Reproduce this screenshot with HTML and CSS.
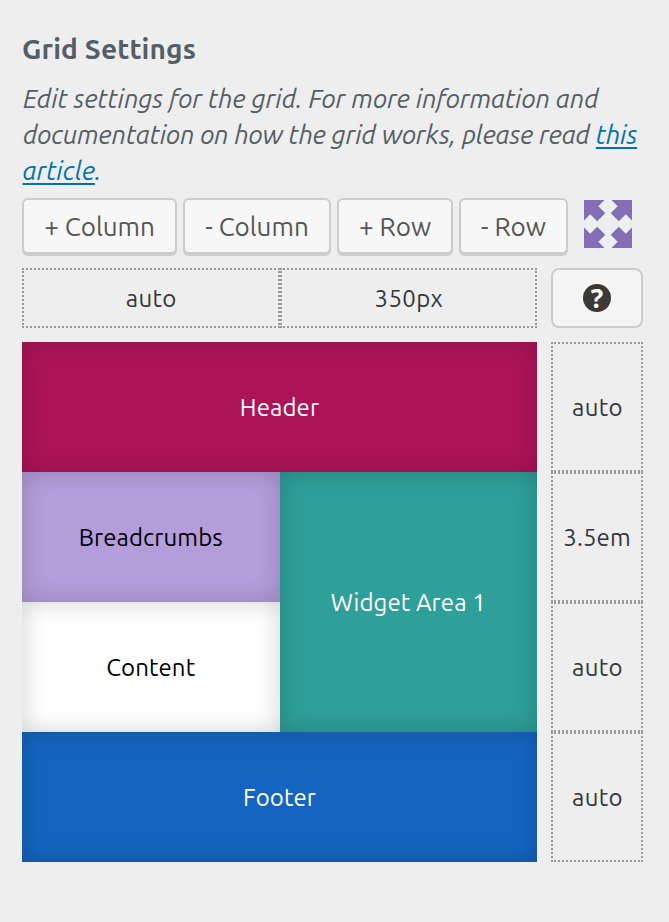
FILE: index.html
```
<!DOCTYPE html>
<html lang="en">
<head>
<meta charset="utf-8">
<title>Grid Settings</title>
<link rel="stylesheet" href="styles.css">
</head>
<body>
<main class="panel">
  <h1 class="title"><span>Grid Settings</span></h1>
  <p class="description">
    <span class="line line-1">Edit settings for the grid. For more information and</span>
    <span class="line line-2">documentation on how the grid works, please read <a href="#">this</a></span>
    <span class="line line-3"><a href="#">article</a>.</span>
  </p>
  <div class="toolbar">
    <button class="button add-column"><span>+ Column</span></button>
    <button class="button remove-column"><span>- Column</span></button>
    <button class="button add-row"><span>+ Row</span></button>
    <button class="button remove-row"><span>- Row</span></button>
    <svg class="expand" viewBox="0 0 48 48" aria-hidden="true">
      <path d="M0 0H20.500L14.300 6.200L21.300 13.200L13.200 21.300L6.200 14.300L0 20.500Z"/>
      <path d="M48 0H27.500L33.700 6.200L26.700 13.200L34.800 21.300L41.800 14.300L48 20.500Z"/>
      <path d="M0 48H20.500L14.300 41.800L21.300 34.800L13.200 26.700L6.200 33.700L0 27.500Z"/>
      <path d="M48 48H27.500L33.700 41.800L26.700 34.800L34.800 26.700L41.800 33.700L48 27.500Z"/>
    </svg>
  </div>
  <div class="builder">
    <div class="columns">
      <div class="track auto">auto</div>
      <div class="track px">350px</div>
    </div>
    <button class="help"><span class="help-icon">?</span></button>
    <div class="areas">
      <div class="area header">Header</div>
      <div class="area breadcrumbs">Breadcrumbs</div>
      <div class="area widget">Widget Area 1</div>
      <div class="area content">Content</div>
      <div class="area footer">Footer</div>
    </div>
    <div class="rows">
      <div class="track auto">auto</div>
      <div class="track em">3.5em</div>
      <div class="track auto">auto</div>
      <div class="track auto">auto</div>
    </div>
  </div>
</main>
</body>
</html>
```
FILE: styles.css
```
* {
  box-sizing: border-box;
}

body {
  margin: 0;
  background: #eee;
  color: #555d66;
  font-family: Ubuntu, "Noto Sans", sans-serif;
}

.panel {
  padding: 31px 26px 60px 22px;
}

.title {
  margin: 0;
  font-size: 28px;
  line-height: 36px;
  font-weight: 700;
  letter-spacing: 0.15px;
}

.description {
  margin: 14px 0 9px;
  font-size: 26px;
  line-height: 36px;
  font-style: italic;
}

.line {
  display: block;
  white-space: nowrap;
}

.line-1 { padding-left: 1px; letter-spacing: -0.1px; }
.line-2 { padding-left: 1px; letter-spacing: -0.17px; }
.line-3 { padding-left: 0.5px; letter-spacing: -0.1px; }

.description a {
  color: #0073aa;
  text-decoration-thickness: 2px;
  text-underline-offset: 3px;
  text-decoration-skip-ink: none;
}

.toolbar {
  display: flex;
  gap: 6px;
  height: 56px;
}

.button {
  display: flex;
  align-items: center;
  justify-content: center;
  height: 56px;
  padding: 2px 0 0;
  border: 2px solid #ccc;
  border-radius: 6px;
  background: #f7f7f7;
  box-shadow: 0 2px 0 #ccc;
  color: #555;
  font: 26px/50px Ubuntu, "Noto Sans", sans-serif;
  white-space: nowrap;
}

.add-column { width: 155px; }
.remove-column { width: 148px; }
.add-row { width: 116px; }
.remove-row { width: 109px; }

.expand {
  width: 48px;
  height: 48px;
  margin: 2px 0 0 10px;
  fill: #826eb4;
}

.builder {
  display: grid;
  grid-template-columns: 515px 92px;
  grid-template-rows: 60px 520px;
  gap: 14px;
  margin-top: 14px;
  font-size: 24px;
  letter-spacing: 0.1px;
}

.columns {
  display: grid;
  grid-template-columns: 1fr 1fr;
}

.rows {
  display: grid;
  grid-template-rows: repeat(4, 1fr);
}

.track {
  display: flex;
  align-items: center;
  justify-content: center;
  border: 2px dotted #999;
  color: #32373c;
}

.track.auto,
.track.px {
  padding-left: 1px;
  letter-spacing: 0.4px;
}

.help {
  display: flex;
  align-items: center;
  justify-content: center;
  padding: 0;
  border: 2px solid #ccc;
  border-radius: 8px;
  background: #f5f5f5;
}

.help-icon {
  width: 28px;
  height: 28px;
  border-radius: 50%;
  background: #3c3836;
  color: #fff;
  font: 700 26px/28px "Noto Sans", sans-serif;
  text-align: center;
}

.areas {
  display: grid;
  grid-template-columns: 1fr 1fr;
  grid-template-rows: repeat(4, 1fr);
  grid-template-areas:
    "header header"
    "crumbs widget"
    "content widget"
    "footer footer";
}

.area {
  display: flex;
  align-items: center;
  justify-content: center;
  box-shadow: inset 0 0 24px rgba(0, 0, 0, 0.19);
  color: #fff;
}

.header { grid-area: header; background: #ad1457; }
.breadcrumbs { grid-area: crumbs; background: #b39ddb; color: #000; }
.widget { grid-area: widget; background: #2e9f99; }
.content { grid-area: content; background: #fff; color: #000; }
.footer { grid-area: footer; background: #1565c0; }
```
